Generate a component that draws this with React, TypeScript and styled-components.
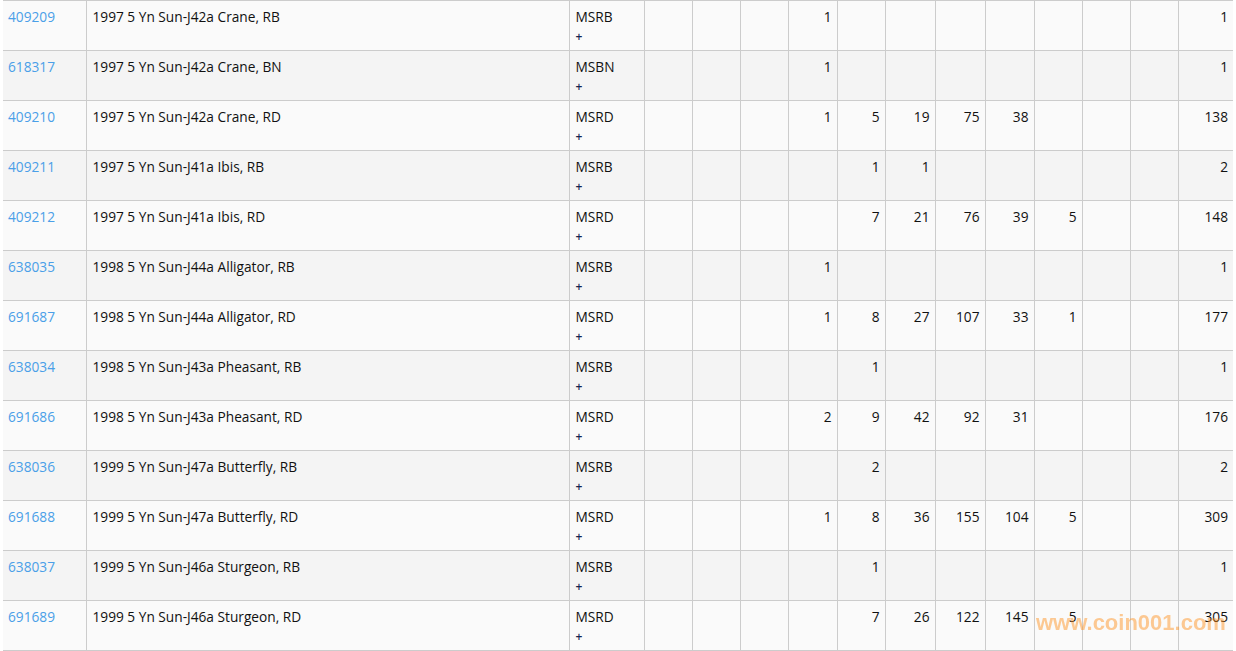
import styled, { createGlobalStyle } from "styled-components";

const GlobalStyle = createGlobalStyle`
    body {
        margin: 0;
        background: #fff;
        font-family: "Open Sans", "Liberation Sans", sans-serif;
    }
`;

type Row = {
    code: string
    name: string
    grade: string
    counts: (number | null)[]
    total: number
}

// counts are grade columns 1..11, total goes in the last column
const rows: Row[] = [
    { code: "409209", name: "1997 5 Yn Sun-J42a Crane, RB", grade: "MSRB", counts: [null, null, null, 1], total: 1 },
    { code: "618317", name: "1997 5 Yn Sun-J42a Crane, BN", grade: "MSBN", counts: [null, null, null, 1], total: 1 },
    { code: "409210", name: "1997 5 Yn Sun-J42a Crane, RD", grade: "MSRD", counts: [null, null, null, 1, 5, 19, 75, 38], total: 138 },
    { code: "409211", name: "1997 5 Yn Sun-J41a Ibis, RB", grade: "MSRB", counts: [null, null, null, null, 1, 1], total: 2 },
    { code: "409212", name: "1997 5 Yn Sun-J41a Ibis, RD", grade: "MSRD", counts: [null, null, null, null, 7, 21, 76, 39, 5], total: 148 },
    { code: "638035", name: "1998 5 Yn Sun-J44a Alligator, RB", grade: "MSRB", counts: [null, null, null, 1], total: 1 },
    { code: "691687", name: "1998 5 Yn Sun-J44a Alligator, RD", grade: "MSRD", counts: [null, null, null, 1, 8, 27, 107, 33, 1], total: 177 },
    { code: "638034", name: "1998 5 Yn Sun-J43a Pheasant, RB", grade: "MSRB", counts: [null, null, null, null, 1], total: 1 },
    { code: "691686", name: "1998 5 Yn Sun-J43a Pheasant, RD", grade: "MSRD", counts: [null, null, null, 2, 9, 42, 92, 31], total: 176 },
    { code: "638036", name: "1999 5 Yn Sun-J47a Butterfly, RB", grade: "MSRB", counts: [null, null, null, null, 2], total: 2 },
    { code: "691688", name: "1999 5 Yn Sun-J47a Butterfly, RD", grade: "MSRD", counts: [null, null, null, 1, 8, 36, 155, 104, 5], total: 309 },
    { code: "638037", name: "1999 5 Yn Sun-J46a Sturgeon, RB", grade: "MSRB", counts: [null, null, null, null, 1], total: 1 },
    { code: "691689", name: "1999 5 Yn Sun-J46a Sturgeon, RD", grade: "MSRD", counts: [null, null, null, null, 7, 26, 122, 145, 5], total: 305 },
];

const numWidths = [48, 48, 48, 49, 48, 50, 50, 49, 48, 48, 48];

const Page = styled.div`
    padding-left: 3px;
    width: 1230px;
`;

const Table = styled.table`
    border-collapse: collapse;
    table-layout: fixed;
    width: 1230px;
    font-size: 13.7px;
    color: #111;
`;

const Tr = styled.tr<{ $odd: boolean }>`
    height: 50px;
    background: ${p => p.$odd ? "#fafafa" : "#f4f4f4"};
`;

const Td = styled.td<{ $first?: boolean }>`
    border: 1px solid #cccccc;
    border-left: ${p => p.$first ? "none" : "1px solid #cccccc"};
    border-right: none;
    vertical-align: top;
    padding: 6px 6px 0 6px;
    line-height: 20px;
    white-space: nowrap;
    overflow: hidden;
`;

const CodeCell = styled(Td)`
    padding-left: 5px;
`;

const NumCell = styled(Td)`
    text-align: right;
    padding-right: 5px;
`;

const Code = styled.a`
    color: #4a9fe8;
    text-decoration: none;
`;

const Plus = styled.div`
    color: #14234f;
    font-size: 12px;
    font-weight: 600;
    line-height: 20px;
`;

const Watermark = styled.div`
    position: fixed;
    left: 1036px;
    top: 610px;
    font-family: "Liberation Sans", Arial, sans-serif;
    font-weight: bold;
    font-size: 22px;
    color: rgba(255, 140, 20, 0.45);
    pointer-events: none;
`;

export default function App() {
    return <Page>
        <GlobalStyle />
        <Table>
            <colgroup>
                <col style={{ width: 83 }} />
                <col style={{ width: 483 }} />
                <col style={{ width: 75 }} />
                {numWidths.map((w, i) => <col key={i} style={{ width: w }} />)}
                <col style={{ width: 55 }} />
            </colgroup>
            <tbody>
                {rows.map((r, i) => (
                    <Tr key={r.code} $odd={i % 2 === 0}>
                        <CodeCell $first><Code href="#">{r.code}</Code></CodeCell>
                        <Td>{r.name}</Td>
                        <Td>
                            {r.grade}
                            <Plus>+</Plus>
                        </Td>
                        {numWidths.map((_, j) => <NumCell key={j}>{r.counts[j] ?? ""}</NumCell>)}
                        <NumCell>{r.total}</NumCell>
                    </Tr>
                ))}
            </tbody>
        </Table>
        <Watermark>www.coin001.com</Watermark>
    </Page>
}
